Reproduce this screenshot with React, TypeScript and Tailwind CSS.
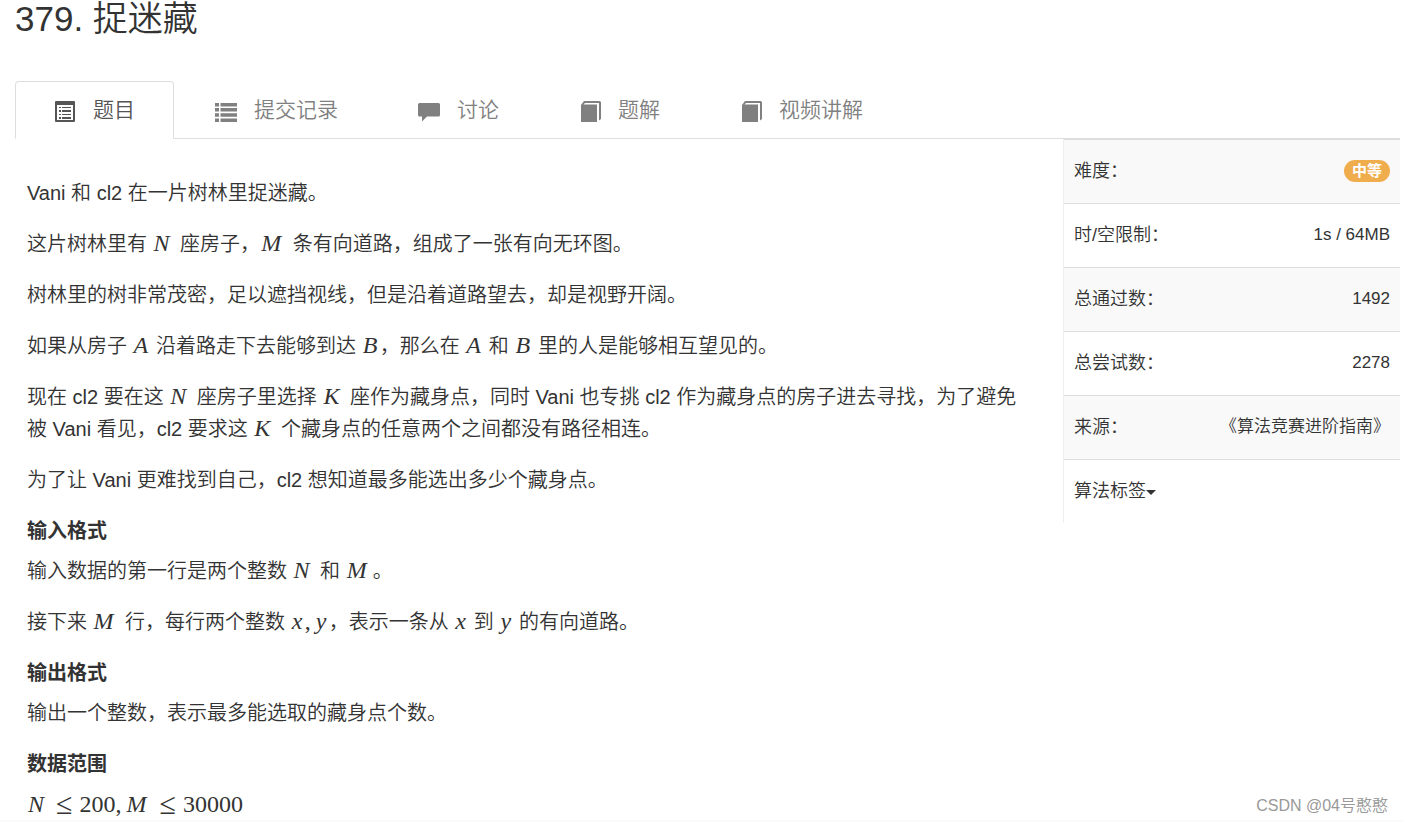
import type { ReactNode } from "react";

const tabs = [
	{ label: "题目", icon: <ListAltIcon />, active: true },
	{ label: "提交记录", icon: <ListIcon /> },
	{ label: "讨论", icon: <CommentIcon /> },
	{ label: "题解", icon: <BookIcon /> },
	{ label: "视频讲解", icon: <BookIcon /> },
];

const info = [
	{ label: "时/空限制：", value: "1s / 64MB" },
	{ label: "总通过数：", value: "1492" },
	{ label: "总尝试数：", value: "2278" },
	{ label: "来源：", value: "《算法竞赛进阶指南》" },
];

export default function App() {
	return (
		<div
			lang="zh-CN"
			className="relative bg-white pl-[15px] pr-[3px] font-['Liberation_Sans','Noto_Sans_CJK_SC',sans-serif] font-[350] text-[#333]"
		>
			<h1 className="text-[35px] leading-[38px]">379. 捉迷藏</h1>

			<nav className="mt-[43px] flex gap-0.5 border-b border-[#ddd]">
				{tabs.map((tab) => (
					<Tab key={tab.label} icon={tab.icon} active={tab.active}>
						{tab.label}
					</Tab>
				))}
			</nav>

			<div className="flex items-start">
				<main className="min-w-0 flex-1 pl-3 pr-[30px] pt-[38px] text-xl leading-8">
					<Paragraph>Vani 和 cl2 在一片树林里捉迷藏。</Paragraph>
					<Paragraph>
						这片树林里有 <Var size="lg">N</Var> 座房子，
						<Var size="xl">M</Var> 条有向道路，组成了一张有向无环图。
					</Paragraph>
					<Paragraph>
						树林里的树非常茂密，足以遮挡视线，但是沿着道路望去，却是视野开阔。
					</Paragraph>
					<Paragraph>
						如果从房子 <Var>A</Var> 沿着路走下去能够到达 <Var>B</Var>
						，那么在 <Var>A</Var> 和 <Var>B</Var> 里的人是能够相互望见的。
					</Paragraph>
					<Paragraph>
						现在 cl2 要在这 <Var size="lg">N</Var> 座房子里选择{" "}
						<Var size="lg">K</Var> 座作为藏身点，同时 Vani 也专挑 cl2
						作为藏身点的房子进去寻找，为了避免被 Vani 看见，cl2 要求这{" "}
						<Var size="lg">K</Var> 个藏身点的任意两个之间都没有路径相连。
					</Paragraph>
					<Paragraph>
						为了让 Vani 更难找到自己，cl2 想知道最多能选出多少个藏身点。
					</Paragraph>

					<Heading>输入格式</Heading>
					<Paragraph>
						输入数据的第一行是两个整数 <Var size="lg">N</Var> 和{" "}
						<Var size="xl">M</Var>。
					</Paragraph>
					<Paragraph>
						接下来 <Var size="xl">M</Var> 行，每行两个整数{" "}
						<Var size="sm">x</Var>
						<Num className="mr-1">,</Num>
						<Var size="sm">y</Var>，表示一条从 <Var size="sm">x</Var> 到{" "}
						<Var size="sm">y</Var> 的有向道路。
					</Paragraph>

					<Heading>输出格式</Heading>
					<Paragraph>输出一个整数，表示最多能选取的藏身点个数。</Paragraph>

					<Heading>数据范围</Heading>
					<p className="flex h-8 items-center">
						<Var size="lg">N</Var>
						<Leq />
						<Num className="mr-1">200,</Num>
						<Var size="xl">M</Var>
						<Leq />
						<Num>30000</Num>
					</p>
				</main>

				<aside className="w-[337px] shrink-0 border-l border-[#eee]">
					<table className="w-full border-separate border-spacing-0 text-lg leading-6">
						<tbody>
							<Row label="难度：">
								<span className="inline-block rounded-full bg-[#f0ad4e] px-2 text-[15px] font-bold leading-[22px] text-white">
									中等
								</span>
							</Row>
							{info.map((item) => (
								<Row key={item.label} label={item.label}>
									{item.value}
								</Row>
							))}
							<tr>
								<td
									colSpan={2}
									className="h-16 border-t border-[#ddd] px-2.5 pb-0.5 pt-0"
								>
									<button type="button" className="flex cursor-pointer items-center">
										算法标签
										<svg
											className="mt-1 h-[5px] w-[10px]"
											viewBox="0 0 10 5"
											fill="currentColor"
										>
											<path d="M0 0h10L5 5z" />
										</svg>
									</button>
								</td>
							</tr>
						</tbody>
					</table>
				</aside>
			</div>

			<footer className="-ml-[15px] -mr-[3px] h-0.5 bg-[#fafafa]" />
			<span className="absolute bottom-1 right-[15px] text-base text-[#999]">
				CSDN @04号憨憨
			</span>
		</div>
	);
}

function Tab({
	icon,
	active,
	children,
}: {
	icon: ReactNode;
	active?: boolean;
	children: ReactNode;
}) {
	return (
		<a
			href="#"
			className={`-mb-px flex h-[58px] items-center gap-[17px] rounded-t border px-[38px] text-[21px] leading-[30px] ${
				active
					? "border-[#ddd] border-b-white bg-white text-[#555]"
					: "border-transparent text-[#808080] hover:text-[#555]"
			}`}
		>
			<span className="mt-0.5 w-[22px]">{icon}</span>
			{children}
		</a>
	);
}

function Row({ label, children }: { label: string; children: ReactNode }) {
	return (
		<tr className="odd:bg-[#f9f9f9]">
			<th
				scope="row"
				className="h-16 whitespace-nowrap border-t border-[#ddd] pb-0.5 pl-2.5 pt-0 text-left font-[350]"
			>
				{label}
			</th>
			<td className="h-16 whitespace-nowrap border-t border-[#ddd] pb-0.5 pr-2.5 pt-0 text-right text-[17px]">
				{children}
			</td>
		</tr>
	);
}

function Paragraph({ children }: { children: ReactNode }) {
	return <p className="mb-[19px]">{children}</p>;
}

function Heading({ children }: { children: ReactNode }) {
	return <h4 className="mb-2 font-bold">{children}</h4>;
}

const varWidths = {
	sm: "w-[14px]",
	md: "w-[18px]",
	lg: "w-[22px]",
	xl: "w-[27px]",
};

// Math variable, boxed so that every letter gets its formula width
function Var({
	size = "md",
	children,
}: {
	size?: keyof typeof varWidths;
	children: ReactNode;
}) {
	return (
		<span
			className={`inline-block pl-px font-['Liberation_Serif',serif] text-2xl font-normal italic leading-none ${varWidths[size]}`}
		>
			{children}
		</span>
	);
}

function Num({ className = "", children }: { className?: string; children: ReactNode }) {
	return (
		<span
			className={`font-['Liberation_Serif',serif] text-2xl font-normal leading-none ${className}`}
		>
			{children}
		</span>
	);
}

function Leq() {
	return (
		<span className="mx-[7px] font-['Liberation_Serif',serif] text-3xl font-normal leading-none">
			≤
		</span>
	);
}

function ListAltIcon() {
	return (
		<svg className="h-[21px] w-[22px]" viewBox="0 0 22 21" fill="currentColor">
			<path
				fillRule="evenodd"
				d="M2 0h18a1 1 0 0 1 1 1v19a1 1 0 0 1-1 1H2a1 1 0 0 1-1-1V1a1 1 0 0 1 1-1zM3 4v15h16V4z"
			/>
			<path d="M5 6h2v1H5zM8 6h9v1H8zM5 9h2v2H5zM8 9h9v2H8zM5 13h2v1H5zM8 13h9v1H8zM5 16h2v2H5zM8 16h9v2H8z" />
		</svg>
	);
}

function ListIcon() {
	return (
		<svg className="h-[21px] w-[22px]" viewBox="0 0 22 21" fill="currentColor">
			<path d="M0 2h4v3.500H0zM5.500 2H22v3.500H5.500zM0 7h4v3.500H0zM5.500 7H22v3.500H5.500zM0 12.200h4v3.500H0zM5.500 12.200H22v3.500H5.500zM0 17.400h4V21H0zM5.500 17.400H22V21H5.500z" />
		</svg>
	);
}

function CommentIcon() {
	return (
		<svg className="h-[21px] w-[22px]" viewBox="0 0 22 21" fill="currentColor">
			<path d="M1.500 2h19A1.500 1.500 0 0 1 22 3.500V14a1.500 1.500 0 0 1-1.500 1.500H9L4 20.500v-5H1.500A1.500 1.500 0 0 1 0 14V3.500A1.500 1.500 0 0 1 1.500 2z" />
		</svg>
	);
}

function BookIcon() {
	return (
		<svg className="h-[21px] w-[22px]" viewBox="0 0 22 21" fill="currentColor">
			<path d="M2 4 5 0h15.500a1.500 1.500 0 0 1 1.500 1.500V18l-2 1.500V2H6L4.500 3.500H18V21H2z" />
		</svg>
	);
}
